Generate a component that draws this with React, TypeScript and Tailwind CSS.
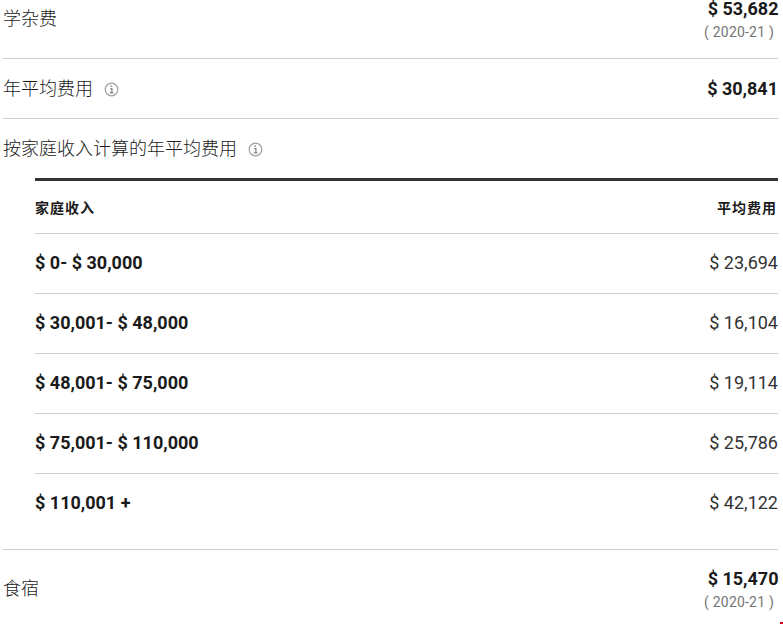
import React from "react";

const rows = [
  ["$ 0- $ 30,000", "$ 23,694"],
  ["$ 30,001- $ 48,000", "$ 16,104"],
  ["$ 48,001- $ 75,000", "$ 19,114"],
  ["$ 75,001- $ 110,000", "$ 25,786"],
  ["$ 110,001 +", "$ 42,122"],
];

const font = "font-['Roboto','Noto_Sans_CJK_SC',sans-serif]";

function InfoIcon() {
  return (
    <svg width="15" height="15" viewBox="0 0 15 15" className="ml-[11px] mt-[2px] shrink-0" fill="none">
      <circle cx="7.5" cy="7.5" r="6.3" stroke="#a0a0a0" strokeWidth="1.2" />
      <path d="M6.3 4.2h1.8M6.3 6.6h1.6v3.8M5.8 10.8h3.6" stroke="#808080" strokeWidth="1.2" />
    </svg>
  );
}

function Cost({ value, year }: { value: string; year: string }) {
  return (
    <div className="-mr-[0.5px] text-right">
      <div className="text-[18px] font-bold leading-[18px] text-[#1a1a1a]">{value}</div>
      <div className="mt-[5px] pr-[4.5px] text-[14px] leading-[18px] tracking-[0.2px] text-[#757575]">{year}</div>
    </div>
  );
}

export default function App() {
  return (
    <div className={`${font} relative h-[624px] w-[783px] overflow-hidden bg-white pl-[3px] text-[#1a1a1a]`}>
      <div className="w-[775px]">
        <div className="flex h-[59px] items-start justify-between border-b border-[#cccccc]">
          <div className="pt-[7px] text-[18px] font-light leading-[24px]">学杂费</div>
          <Cost value="$ 53,682" year="( 2020-21 )" />
        </div>

        <div className="flex h-[60px] items-center justify-between border-b border-[#cccccc]">
          <div className="flex items-center text-[18px] font-light leading-[24px]">
            年平均费用
            <InfoIcon />
          </div>
          <div className="text-[18px] font-bold leading-[22px]">$ 30,841</div>
        </div>

        <div className="flex h-[59px] items-center text-[18px] font-light leading-[24px]">
          按家庭收入计算的年平均费用
          <InfoIcon />
        </div>

        <div className="ml-[32px] border-t-[3px] border-[#333333]">
          <div className="flex h-[53px] items-center justify-between border-b border-[#cccccc] pl-0 pr-px pt-[2px] text-[14px] font-bold tracking-[1px]">
            <div>家庭收入</div>
            <div>平均费用</div>
          </div>
          {rows.map(([range, cost], i) => (
            <div
              key={range}
              className={`flex h-[60px] items-center justify-between border-b pb-[2px] text-[18px] ${i < rows.length - 1 ? "border-[#cccccc]" : "border-transparent"}`}
            >
              <div className="font-bold">{range}</div>
              <div className="text-[#333333]">{cost}</div>
            </div>
          ))}
        </div>

        <div className="mt-[15px] flex h-[82px] items-center justify-between border-t border-[#cccccc]">
          <div className="pb-[3px] text-[18px] font-light leading-[24px]">食宿</div>
          <Cost value="$ 15,470" year="( 2020-21 )" />
        </div>
      </div>
      {/* red speck in the bottom corner */}
      <div className="absolute bottom-0 right-0 h-[2px] w-[3px] bg-[#d0021b]" />
    </div>
  );
}
